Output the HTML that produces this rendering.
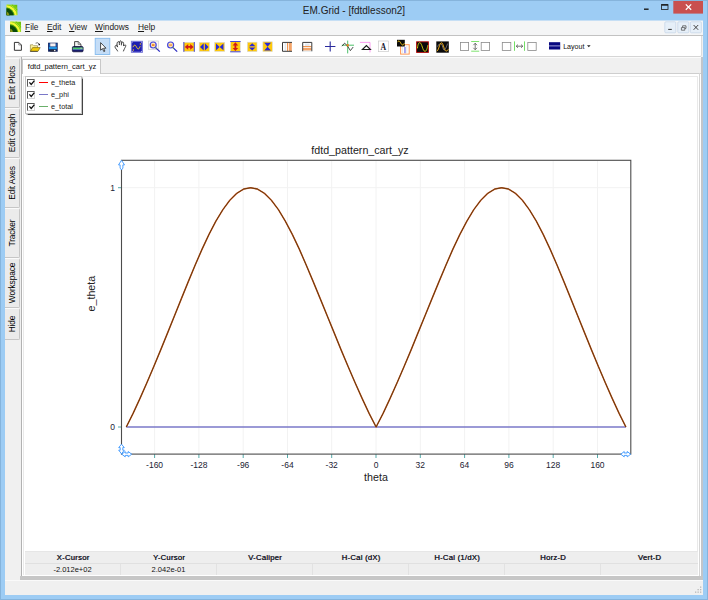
<!DOCTYPE html>
<html><head><meta charset="utf-8"><title>EM.Grid - [fdtdlesson2]</title>
<style>
html,body{margin:0;padding:0;}
body{width:708px;height:600px;overflow:hidden;background:#9dcbf2;font-family:"Liberation Sans",sans-serif;position:relative;}
.abs{position:absolute;}
#win{position:absolute;left:0;top:0;width:708px;height:600px;background:#9dccf4;box-shadow:inset 0 0 0 1px #86b4dc;}
#title{position:absolute;left:0;top:3px;width:708px;text-align:center;font-size:10px;color:#222;line-height:15px;}
#menubar{position:absolute;left:5px;top:20px;width:698px;height:16px;background:#f4f5f6;border-top:1px solid #c6dff5;border-bottom:1px solid #c2c2c2;box-sizing:border-box;}
.mi{position:absolute;top:0px;font-size:8.4px;line-height:13px;color:#1a1a1a;white-space:nowrap;}
.mi u{text-decoration:underline;}
#toolbar{position:absolute;left:6px;top:36px;width:695px;height:20px;background:#fff;border-radius:0 0 1px 1px;box-shadow:0 1px 0 #d6d6d6, 1px 0 0 #dcdcdc;}
#client{position:absolute;left:5px;top:36px;width:698px;height:559px;background:#f0f0f0;}
#side{position:absolute;left:5px;top:57px;width:17px;height:523px;background:#f0f0f0;}
.vtab{position:absolute;left:0px;width:14px;background:#ebebeb;border:1px solid #c6c6c6;border-left:none;border-top-color:#fafafa;border-radius:0 2px 2px 0;box-sizing:content-box;}
.vtab span{position:absolute;left:50%;top:50%;transform:translate(-50%,-50%) rotate(-90deg);white-space:nowrap;font-size:8.4px;letter-spacing:-0.15px;color:#000;}
#panel{position:absolute;left:21px;top:57px;width:680px;height:519px;background:#fff;border-left:1px solid #b2b2b2;box-sizing:border-box;}
#inner{position:absolute;left:23px;top:76px;width:675px;height:499px;border:1px solid #e9e9e9;border-bottom:none;box-sizing:border-box;}
#rband{position:absolute;left:701px;top:57px;width:2px;height:523px;background:#c2c5ca;}
#bband{position:absolute;left:20px;top:576px;width:683px;height:4px;background:#c6c6c6;}
#tabstrip{position:absolute;left:22px;top:57px;width:679px;height:17px;background:#f0f0f0;border-top:1px solid #fbfbfb;border-bottom:1px solid #cecece;box-sizing:border-box;}
#vline{position:absolute;left:699px;top:73px;width:1px;height:503px;background:#d6d6d6;}
#tsr{position:absolute;left:700px;top:57px;width:1px;height:17px;background:#f0f0f0;}
#tab{position:absolute;left:22px;top:59px;width:79px;height:15px;background:#fff;border:1px solid #c8c8c8;border-bottom:none;box-sizing:border-box;font-size:7.5px;line-height:14px;text-align:center;color:#111;padding-left:1px;}
#legend{position:absolute;left:25px;top:76px;width:57px;height:38px;background:#fff;border:1px solid #c4c4c4;box-sizing:border-box;box-shadow:1.2px 1.2px 1px #444;}
.lg{position:absolute;left:0;height:11px;width:56px;font-size:7.3px;line-height:11px;color:#222;}
.lg i{position:absolute;left:1px;top:1.5px;width:6px;height:6px;border:1px solid #d4d4d4;border-top-color:#5a5a5a;border-left-color:#5a5a5a;background:#fff;box-sizing:content-box;}
.lg svg{position:absolute;left:1.5px;top:2px;}
.lg b{position:absolute;left:12.5px;top:5px;width:9px;height:1.3px;}
.lg span{position:absolute;left:25px;top:0;}
#tbl{position:absolute;left:25px;top:551px;width:673px;height:24px;background:#eeeeee;border-top:1px solid #e6e6e6;box-sizing:border-box;}
#tbl:after{content:"";position:absolute;left:0;top:11px;width:673px;height:1px;background:#e0e0e0;}
.th{position:absolute;top:0;height:11px;font-size:7.7px;line-height:11px;font-weight:normal;text-shadow:0.35px 0 0 #1a1a2a;letter-spacing:0.25px;color:#1a1a2a;text-align:center;}
.td{position:absolute;top:12px;height:11px;font-size:7.5px;line-height:11px;color:#111;text-align:center;box-sizing:border-box;border-right:1px solid #e2e2e2;}
#status{position:absolute;left:5px;top:580px;width:698px;height:15px;background:#f0f0f0;border-top:1px solid #fafafa;box-sizing:border-box;}
</style></head><body>
<div id="win"></div>
<div id="title">EM.Grid - [fdtdlesson2]</div>
<div id="client"></div>
<div id="menubar">
<span class="mi" style="left:20px"><u>F</u>ile</span>
<span class="mi" style="left:42px"><u>E</u>dit</span>
<span class="mi" style="left:64px"><u>V</u>iew</span>
<span class="mi" style="left:90px"><u>W</u>indows</span>
<span class="mi" style="left:133px"><u>H</u>elp</span>
</div>
<div id="toolbar"></div>
<svg class="abs" style="left:0;top:0" width="708" height="60" viewBox="0 0 708 60">
<!-- app icons -->
<defs>
</defs>
<clipPath id="cp"><rect x="6.5" y="4.6" width="11" height="10.6"/></clipPath>
<g id="appico" clip-path="url(#cp)">
<rect x="6.5" y="4.6" width="11" height="10.6" fill="#6cc010"/>
<circle cx="5.5" cy="16.5" r="12.4" fill="none" stroke="#b4ec30" stroke-width="0.9"/>
<circle cx="5.5" cy="16.5" r="14" fill="none" stroke="#8ed418" stroke-width="1"/>
<circle cx="5.5" cy="16.5" r="10.4" fill="none" stroke="#f4f838" stroke-width="2.2"/>
<circle cx="5.5" cy="16.5" r="8.9" fill="#3c9010"/>
<circle cx="5.5" cy="16.5" r="8.2" fill="#0a480a"/>
<circle cx="5.5" cy="16.5" r="4.6" fill="#1c5a0c"/>
<path d="M6.5,11.6q2.4,0.8 2.8,3.6h-2.8z" fill="#8a9418"/>
</g>
<g transform="translate(3.6,16.8)"><g clip-path="url(#cp)">
<rect x="6.5" y="4.6" width="11" height="10.6" fill="#6cc010"/>
<circle cx="5.5" cy="16.5" r="12.4" fill="none" stroke="#b4ec30" stroke-width="0.9"/>
<circle cx="5.5" cy="16.5" r="14" fill="none" stroke="#8ed418" stroke-width="1"/>
<circle cx="5.5" cy="16.5" r="10.4" fill="none" stroke="#f4f838" stroke-width="2.2"/>
<circle cx="5.5" cy="16.5" r="8.9" fill="#3c9010"/>
<circle cx="5.5" cy="16.5" r="8.2" fill="#0a480a"/>
<circle cx="5.5" cy="16.5" r="4.6" fill="#1c5a0c"/>
<path d="M6.5,11.6q2.4,0.8 2.8,3.6h-2.8z" fill="#8a9418"/>
</g></g>
<!-- new -->
<path d="M14.4,42.4h4.4l2.6,2.6v5.3h-7z" fill="#fff" stroke="#2a2a2a" stroke-width="0.95"/>
<path d="M18.8,42.4v2.6h2.6" fill="none" stroke="#555" stroke-width="0.6"/>
<!-- open -->
<path d="M30.4,51.2v-6.4h2.6l0.9,0.9h3.6v2" fill="#fbf2a0" stroke="#8a7a30" stroke-width="0.6"/>
<path d="M30.4,51.3l2.2,-3.7h7.6l-2.2,3.7z" fill="#f3cd0a" stroke="#6a5608" stroke-width="0.6"/>
<path d="M30.2,51.4h7.4" stroke="#333" stroke-width="0.7"/>
<path d="M35.6,43.2q2,-1.2 3.4,0.6" stroke="#333" stroke-width="0.7" fill="none"/>
<rect x="38.5" y="43.8" width="1.5" height="1.5" fill="#111"/>
<!-- save -->
<rect x="48.1" y="42.7" width="9.6" height="9" fill="#0c1c58"/>
<rect x="48.9" y="46.6" width="8" height="2.7" fill="#2294e4"/>
<rect x="48.9" y="43.4" width="1.2" height="3.2" fill="#1a5ab0"/><rect x="55.7" y="43.4" width="1.2" height="3.2" fill="#1a5ab0"/>
<rect x="50.2" y="43.3" width="5.4" height="3.1" fill="#f6f0f2"/>
<rect x="50.2" y="49.5" width="5.6" height="2.1" fill="#2c2c3c"/>
<rect x="54.1" y="49.9" width="1.3" height="1.3" fill="#fff"/>
<!-- print -->
<path d="M74.6,47v-5.4h3.6l2.8,2.8v2.6z" fill="#f4f4f4" stroke="#2a2a2a" stroke-width="0.85"/>
<path d="M78.2,41.6v2.8h2.8" fill="none" stroke="#444" stroke-width="0.6"/>
<rect x="72.4" y="46.6" width="10.7" height="5.2" rx="1" fill="#14146a" stroke="#0a0a30" stroke-width="0.7"/>
<rect x="72.8" y="47.5" width="10" height="1.4" fill="#58e070"/>
<rect x="80.2" y="47.7" width="2" height="1" fill="#b0b8b8"/>
<rect x="72.8" y="49" width="10" height="1.1" fill="#4a78a8"/>
<!-- pointer (selected) -->
<rect x="95.2" y="38.3" width="14.6" height="16.2" fill="#c4ddf7" stroke="#84bbee" stroke-width="0.9"/>
<path d="M100.6,42.6v7.6l1.9,-1.6l1.3,3l1.1,-0.5l-1.3,-2.9h2.4z" fill="#fff" stroke="#222" stroke-width="0.8" stroke-linejoin="round"/>
<!-- hand -->
<path d="M117.6,51c-0.5,-1.5 -2.3,-2.5 -2.5,-3.8c-0.2,-1.1 0.3,-1.7 1,-1.9c0.8,-0.2 1.3,0.5 1.5,1.5M117.2,46.6c-0.1,-1 -0.3,-2.3 -0.1,-3.3c0.2,-1.1 0.7,-1.7 1.4,-1.7c0.7,0 0.9,1 0.9,3M119.6,42.8c0,-1.2 0.2,-2 0.9,-2c0.8,0 0.9,0.8 0.9,2v2.2M121.7,43.2c0.1,-0.7 0.4,-1.1 1,-1.1c0.8,0 0.9,0.7 0.9,1.6v2M124,45.6c0.3,-0.5 0.7,-0.8 1.2,-0.7c0.7,0.2 0.7,0.9 0.4,1.6c-0.6,1.4 -1.4,2.4 -2.1,4.5" fill="none" stroke="#222" stroke-width="0.85" stroke-linecap="round" stroke-linejoin="round"/>
<!-- blue graph -->
<rect x="131.5" y="41.4" width="10.8" height="10.8" fill="#1c1cb0" stroke="#7676d8" stroke-width="1.2"/>
<path d="M133,47.2c0.6,-1.6 1.6,-2.8 2.6,-1.6s1.6,3.4 2.6,3.4s1.4,-1.6 2,-2.8" stroke="#f0c828" stroke-width="1" fill="none"/>
<rect x="139.8" y="43.4" width="1.2" height="1.2" fill="#f0c828"/><rect x="132.8" y="49.4" width="1.2" height="1.2" fill="#f0c828"/>
<g fill="#c8c8e8"><rect x="131.8" y="41.7" width="0.9" height="0.9"/><rect x="141" y="41.7" width="0.9" height="0.9"/><rect x="131.8" y="51" width="0.9" height="0.9"/><rect x="141" y="51" width="0.9" height="0.9"/></g>
<!-- zoom in -->
<rect x="148.6" y="41" width="9.8" height="8.6" fill="#fafafa" stroke="#c6c6c6" stroke-width="0.6"/>
<circle cx="153.2" cy="45" r="3" fill="#ffe8b0" stroke="#4646de" stroke-width="1.2"/>
<rect x="151.9" y="44.2" width="2.6" height="1.7" fill="#f08020"/>
<path d="M155.6,47.6l4.2,4" stroke="#2a2ac0" stroke-width="1.3"/>
<path d="M155.5,47.5l0.9,0.9" stroke="#7ab040" stroke-width="1.2"/>
<!-- zoom out -->
<circle cx="170.6" cy="45" r="3" fill="#ffe8b0" stroke="#4646de" stroke-width="1.2"/>
<rect x="169.2" y="44.4" width="2.8" height="1.3" fill="#f09030"/>
<path d="M173,47.6l4.2,4" stroke="#2a2ac0" stroke-width="1.3"/>
<path d="M172.9,47.5l0.9,0.9" stroke="#7ab040" stroke-width="1.2"/>
<!-- yellow icons -->
<g stroke="#d8d8d8" stroke-width="0.6" fill="#ffc90a">
<rect x="183.6" y="42.4" width="11" height="9"/>
<rect x="199.2" y="42.4" width="10.2" height="9"/>
<rect x="214.7" y="42.4" width="10" height="9"/>
<rect x="230.6" y="41.4" width="9.6" height="10.4"/>
<rect x="247.4" y="42.2" width="9.6" height="9.4"/>
<rect x="262.9" y="41.8" width="9.4" height="9.8"/>
</g>
<path d="M183.9,42v9.8M194.3,42v9.8" stroke="#4848d8" stroke-width="1"/>
<path d="M184.8,46.9l3.4,-2.9v2h2v-2l3.4,2.9l-3.4,2.9v-2h-2v2z" fill="#d01818"/>
<path d="M200,46.9l3.7,-3.6v7.2zM208.6,46.9l-3.7,-3.6v7.2z" fill="#2828d8"/>
<path d="M216,43.5l3.7,3.4l-3.7,3.4zM223.4,43.5l-3.7,3.4l3.7,3.4z" fill="#2828d8"/>
<path d="M230.2,41.5h10.4M230.2,51.8h10.4" stroke="#4848d8" stroke-width="1"/>
<path d="M235.4,42.3l2.8,3.2h-1.9v2.4h1.9l-2.8,3.2l-2.8,-3.2h1.9v-2.4h-1.9z" fill="#d01818"/>
<path d="M252.2,43.2l3.2,3h-6.4zM252.2,50.6l3.2,-3h-6.4z" fill="#2828d8"/>
<path d="M264.2,42.8h6.8l-3.4,3.9zM264.2,50.6h6.8l-3.4,-3.9z" fill="#2828d8"/>
<!-- table icons -->
<rect x="282.5" y="42.4" width="9.3" height="8.8" fill="#fff"/>
<rect x="284.6" y="43" width="1.6" height="7.8" fill="#e4e8ee"/>
<rect x="287.1" y="42.8" width="1.1" height="8.2" fill="#f08a3c"/>
<rect x="289" y="42.8" width="2.8" height="8.2" fill="#f4a468"/>
<path d="M292,42.4h-9.5v8.9h9.5" fill="none" stroke="#3a3a3a" stroke-width="1"/>
<rect x="302.6" y="42.4" width="9.2" height="8.8" fill="#fff"/>
<rect x="305" y="43.6" width="4.6" height="2.4" fill="#e4e8ee"/>
<rect x="303" y="46.1" width="8.4" height="1" fill="#f08a3c"/>
<rect x="303" y="47.9" width="8.4" height="2.6" fill="#f4a468"/>
<path d="M302.7,51.3v-8.9h9.1v8.9" fill="none" stroke="#3a3a3a" stroke-width="1"/>
<path d="M303,51.2h8.6" stroke="#c8d4dc" stroke-width="0.6"/>
<!-- plus -->
<path d="M325,46.5h10.4M330.2,41.4v10.2" stroke="#2a2a9c" stroke-width="1.1"/>
<!-- crosshair marker -->
<path d="M347.7,40.6v12.8M341.8,45.2h12.2" stroke="#38b858" stroke-width="0.9"/>
<path d="M342,46.2l2.6,-3l2.6,2.4l3.2,5l2.8,-3.6" stroke="#222" stroke-width="0.8" fill="none"/>
<rect x="346.6" y="44.2" width="2.2" height="2.2" fill="#f08020"/>
<!-- pink corner triangle -->
<path d="M359.9,42.4h10.1v10" stroke="#f868e8" stroke-width="0.65" fill="none"/>
<path d="M362.4,49.5l4,-4l4,4z" stroke="#1a1a1a" stroke-width="1.1" fill="#fff"/>
<!-- A -->
<rect x="378.4" y="41" width="10.2" height="10.7" fill="#fff" stroke="#c4c4c4" stroke-width="0.6"/>
<text transform="translate(383.3,49.8) scale(0.78,1)" x="0" y="0" font-family="Liberation Serif, serif" font-weight="bold" font-size="10" text-anchor="middle" fill="#1a1a30">A</text>
<!-- black + orange -->
<rect x="400.6" y="44.7" width="8.6" height="9.4" fill="#fff" stroke="#ff9650" stroke-width="1"/>
<path d="M402.4,46v7.4M406.8,46v7.4" stroke="#e4e4e4" stroke-width="0.9"/>
<rect x="404.2" y="47" width="1.5" height="6.2" fill="#8c8cf0"/>
<rect x="397" y="39.8" width="7.8" height="6.7" fill="#0a0a0a"/>
<path d="M397.5,42.2c0.7,-1.4 1.7,-1.6 2.5,-0.4s1.6,3.2 2.6,3.2s1.4,-1 1.8,-2" stroke="#e8c018" stroke-width="1" fill="none"/>
<!-- red-bordered sine -->
<rect x="416.6" y="41.8" width="11.8" height="10.6" fill="#0a0a0a" stroke="#b40808" stroke-width="0.9"/>
<path d="M417.4,48.4C418,43.6 419,42.4 420,42.7C422,43.4 422.6,50.8 424.8,51.3C426.4,51.6 427.2,48.4 427.9,45.2" stroke="#d8d010" stroke-width="0.95" fill="none"/>
<!-- black double sine -->
<rect x="436.3" y="41.4" width="12.5" height="11.3" fill="#0a0a0a"/>
<path d="M437.6,46.6c1,-2.4 2.6,-3.6 3.8,-2.6s1.6,5.4 2.6,6s2.4,-3 3.6,-6.4" stroke="#8a8a98" stroke-width="0.8" fill="none"/>
<path d="M436.8,51.2c1.6,-0.6 2.4,-5.4 3.4,-7.2s1.8,-1.6 2.6,0.2s1.8,6.6 3.2,6.8s1.6,-0.8 2.4,-1.8" stroke="#e8a818" stroke-width="1" fill="none"/>
<!-- two squares vertical -->
<g fill="#fff" stroke="#8a8a8a" stroke-width="0.8">
<rect x="460.4" y="42.5" width="8.2" height="8"/>
<rect x="481.2" y="42.5" width="8.4" height="8"/>
<rect x="502.3" y="42.4" width="8.5" height="8"/>
<rect x="527.8" y="42.4" width="8.4" height="8"/>
</g>
<path d="M471.2,41.5h8M471.2,51.2h8" stroke="#70e060" stroke-width="0.9"/>
<path d="M475.2,43.4v6M473.4,45.2l1.8,-2l1.8,2M473.4,47.8l1.8,2l1.8,-2" stroke="#555" stroke-width="0.8" fill="none"/>
<path d="M514.5,41.4v9.4M524.5,41.4v9.4" stroke="#50d840" stroke-width="0.8"/>
<path d="M516.2,46.2h6.6M518,44.6l-1.8,1.6l1.8,1.6M521,44.6l1.8,1.6l-1.8,1.6" stroke="#555" stroke-width="0.8" fill="none"/>
<!-- layout -->
<rect x="549" y="42.2" width="11.2" height="7.3" fill="#080880"/>
<path d="M549,45.9h11.2" stroke="#c8c8f0" stroke-width="0.8"/>
<text x="563.2" y="48.9" font-family="Liberation Sans, sans-serif" font-size="8" fill="#111" textLength="21.2" lengthAdjust="spacingAndGlyphs">Layout</text>
<path d="M587,45.2h3.6l-1.8,2z" fill="#222"/>
<!-- window buttons -->
<rect x="673.3" y="1" width="29.7" height="12.6" fill="#c9504f"/>
<path d="M685.8,4.4l5.4,5.4M691.2,4.4l-5.4,5.4" stroke="#fff" stroke-width="1.25"/>
<rect x="661.6" y="4.6" width="6.4" height="4.8" fill="none" stroke="#1a1a1a" stroke-width="0.8"/>
<path d="M661.6,5h6.4" stroke="#1a1a1a" stroke-width="1.4"/>
<path d="M644,9.2h4.6" stroke="#1a1a1a" stroke-width="1.4"/>
<!-- MDI buttons -->
<g fill="#e6eff8" stroke="#c3d3e6" stroke-width="0.7">
<rect x="664.8" y="21.8" width="11" height="11" rx="1"/>
<rect x="677.8" y="21.8" width="11" height="11" rx="1"/>
<rect x="690.4" y="21.8" width="11" height="11" rx="1"/>
</g>
<path d="M668.2,29.4h3.6" stroke="#333" stroke-width="1"/>
<path d="M681.4,27.6h3.4v2.6h-3.4zM682.6,27.4v-1.6h3.4v2.6h-1.2" stroke="#444" stroke-width="0.7" fill="none"/>
<path d="M693.6,25l4.6,4.8M698.2,25l-4.6,4.8" stroke="#3a3a3a" stroke-width="0.95"/>
</svg>
<div id="side">
<div class="vtab" style="top:1px;height:48px"><span>Edit Plots</span></div>
<div class="vtab" style="top:51px;height:48px"><span>Edit Graph</span></div>
<div class="vtab" style="top:101px;height:48px"><span>Edit Axes</span></div>
<div class="vtab" style="top:151px;height:48px"><span>Tracker</span></div>
<div class="vtab" style="top:201px;height:48px"><span>Workspace</span></div>
<div class="vtab" style="top:251px;height:30px"><span>Hide</span></div>
</div>
<div id="panel"></div><div id="rband"></div><div id="bband"></div>
<div id="tabstrip"></div>
<div id="inner"></div><div id="vline"></div>
<div id="tab">fdtd_pattern_cart_yz</div>
<svg class="abs" style="left:0;top:0" width="708" height="600" viewBox="0 0 708 600">
<g stroke="#f2f2f2" stroke-width="1" fill="none">
<path d="M154.6,161V453M198.9,161V453M243.2,161V453M287.5,161V453M331.7,161V453M376,161V453M420.3,161V453M464.6,161V453M508.9,161V453M553.2,161V453M597.5,161V453M122,187.7H630"/>
</g>
<g stroke="#5aa" stroke-width="1" fill="none">
<path d="M154.6,454v4M198.9,454v4M243.2,454v4M287.5,454v4M331.7,454v4M376,454v4M420.3,454v4M464.6,454v4M508.9,454v4M553.2,454v4M597.5,454v4M118,187.7h4M118,427h4"/>
</g>
<path d="M126.3,427H626" stroke="#7a78c8" stroke-width="1.3" fill="none"/>
<path d="M126.3,427.0 L133.1,413.4 L140.0,398.4 L146.9,382.7 L153.8,366.5 L160.7,349.9 L167.6,332.9 L174.5,315.8 L181.4,298.6 L188.3,281.6 L195.2,265.0 L202.1,249.1 L209.0,234.4 L215.9,221.1 L222.9,209.6 L229.8,200.3 L236.7,193.4 L243.6,189.1 L250.6,187.7 L257.5,189.1 L264.5,193.4 L271.4,200.3 L278.4,209.6 L285.3,221.1 L292.3,234.4 L299.3,249.1 L306.2,265.0 L313.2,281.6 L320.2,298.6 L327.2,315.8 L334.2,332.9 L341.1,349.9 L348.1,366.5 L355.1,382.7 L362.1,398.4 L369.1,413.4 L376.1,427.0 L383.1,413.4 L390.1,398.4 L397.1,382.7 L404.1,366.5 L411.1,349.9 L418.0,332.9 L425.0,315.8 L432.0,298.6 L439.0,281.6 L446.0,265.0 L452.9,249.1 L459.9,234.4 L466.9,221.1 L473.8,209.6 L480.8,200.3 L487.7,193.4 L494.7,189.1 L501.6,187.7 L508.6,189.1 L515.5,193.4 L522.4,200.3 L529.3,209.6 L536.3,221.1 L543.2,234.4 L550.1,249.1 L557.0,265.0 L563.9,281.6 L570.8,298.6 L577.7,315.8 L584.6,332.9 L591.5,349.9 L598.4,366.5 L605.3,382.7 L612.2,398.4 L619.1,413.4 L625.9,427.0" stroke="#c8552a" stroke-width="1.5" fill="none" stroke-linejoin="round"/>
<path d="M126.3,427.0 L133.1,413.4 L140.0,398.4 L146.9,382.7 L153.8,366.5 L160.7,349.9 L167.6,332.9 L174.5,315.8 L181.4,298.6 L188.3,281.6 L195.2,265.0 L202.1,249.1 L209.0,234.4 L215.9,221.1 L222.9,209.6 L229.8,200.3 L236.7,193.4 L243.6,189.1 L250.6,187.7 L257.5,189.1 L264.5,193.4 L271.4,200.3 L278.4,209.6 L285.3,221.1 L292.3,234.4 L299.3,249.1 L306.2,265.0 L313.2,281.6 L320.2,298.6 L327.2,315.8 L334.2,332.9 L341.1,349.9 L348.1,366.5 L355.1,382.7 L362.1,398.4 L369.1,413.4 L376.1,427.0 L383.1,413.4 L390.1,398.4 L397.1,382.7 L404.1,366.5 L411.1,349.9 L418.0,332.9 L425.0,315.8 L432.0,298.6 L439.0,281.6 L446.0,265.0 L452.9,249.1 L459.9,234.4 L466.9,221.1 L473.8,209.6 L480.8,200.3 L487.7,193.4 L494.7,189.1 L501.6,187.7 L508.6,189.1 L515.5,193.4 L522.4,200.3 L529.3,209.6 L536.3,221.1 L543.2,234.4 L550.1,249.1 L557.0,265.0 L563.9,281.6 L570.8,298.6 L577.7,315.8 L584.6,332.9 L591.5,349.9 L598.4,366.5 L605.3,382.7 L612.2,398.4 L619.1,413.4 L625.9,427.0" stroke="#5e3a06" stroke-width="0.9" fill="none" stroke-linejoin="round"/>
<rect x="121.5" y="160.3" width="509.3" height="293.8" fill="none" stroke="#4c4c4c" stroke-width="1.1"/>
<g fill="#fff" stroke="#3a96ff" stroke-width="0.9" stroke-linejoin="round">
<path d="M121.5,160.3l3,4.6h-1.6v3.2l-1.4,1.8l-1.4,-1.8v-3.2h-1.6z"/>
<path d="M121.5,444.2l2.8,3.4h-1.5v2.6h1.5l-2.8,3.6l-2.8,-3.6h1.5v-2.6h-1.5z"/>
<path d="M121.8,454.2l3.4,-2.7v1.5h3v-1.5l3.5,2.7l-3.5,2.7v-1.5h-3v1.5z"/>
<path d="M620.8,454.2l3.4,-2.7v1.5h3v-1.5l3.5,2.7l-3.5,2.7v-1.5h-3v1.5z"/>
</g>
<g font-family="Liberation Sans, sans-serif" font-size="8.5" fill="#222233" text-anchor="middle">
<text x="154.6" y="467.7">-160</text><text x="198.9" y="467.7">-128</text><text x="243.2" y="467.7">-96</text><text x="287.5" y="467.7">-64</text><text x="331.7" y="467.7">-32</text><text x="376" y="467.7">0</text><text x="420.3" y="467.7">32</text><text x="464.6" y="467.7">64</text><text x="508.9" y="467.7">96</text><text x="553.2" y="467.7">128</text><text x="597.5" y="467.7">160</text>
<text x="112.7" y="190.6">1</text><text x="112.5" y="429.8">0</text>
</g>
<g font-family="Liberation Sans, sans-serif" font-size="10.7" fill="#222" text-anchor="middle">
<text x="360" y="154">fdtd_pattern_cart_yz</text>
<text x="376" y="480.7">theta</text>
<text transform="translate(95.2,293.6) rotate(-90)" x="0" y="0">e_theta</text>
</g>
</svg>
<div id="legend">
<div class="lg" style="top:0px"><i></i><svg width="8" height="8" viewBox="0 0 8 8"><path d="M1.4,3.4l1.8,2l3.2,-3.8" stroke="#111" stroke-width="1.3" fill="none"/></svg><b style="background:#f00"></b><span>e_theta</span></div>
<div class="lg" style="top:12px"><i></i><svg width="8" height="8" viewBox="0 0 8 8"><path d="M1.4,3.4l1.8,2l3.2,-3.8" stroke="#111" stroke-width="1.3" fill="none"/></svg><b style="background:#7a78c8"></b><span>e_phi</span></div>
<div class="lg" style="top:24px"><i></i><svg width="8" height="8" viewBox="0 0 8 8"><path d="M1.4,3.4l1.8,2l3.2,-3.8" stroke="#111" stroke-width="1.3" fill="none"/></svg><b style="background:#6ab06a"></b><span>e_total</span></div>
</div>
<div id="tbl">
<div class="th" style="left:0;width:96px">X-Cursor</div>
<div class="th" style="left:96px;width:96px">Y-Cursor</div>
<div class="th" style="left:192px;width:96px">V-Caliper</div>
<div class="th" style="left:288px;width:96px">H-Cal (dX)</div>
<div class="th" style="left:384px;width:96px">H-Cal (1/dX)</div>
<div class="th" style="left:480px;width:96px">Horz-D</div>
<div class="th" style="left:576px;width:97px">Vert-D</div>
<div class="td" style="left:0;width:96px">-2.012e+02</div>
<div class="td" style="left:96px;width:96px">2.042e-01</div>
<div class="td" style="left:192px;width:96px"></div>
<div class="td" style="left:288px;width:96px"></div>
<div class="td" style="left:384px;width:96px"></div>
<div class="td" style="left:480px;width:96px"></div>
<div class="td" style="left:576px;width:97px;border-right:none"></div>
</div>
<div id="status"></div>
<svg class="abs" style="left:694px;top:586px" width="9" height="9" viewBox="0 0 9 9"><g fill="#b8b8b8"><rect x="6" y="0.5" width="1.3" height="1.3"/><rect x="6" y="3" width="1.3" height="1.3"/><rect x="3.5" y="3" width="1.3" height="1.3"/><rect x="6" y="5.5" width="1.3" height="1.3"/><rect x="3.5" y="5.5" width="1.3" height="1.3"/><rect x="1" y="5.5" width="1.3" height="1.3"/></g></svg>
</body></html>
